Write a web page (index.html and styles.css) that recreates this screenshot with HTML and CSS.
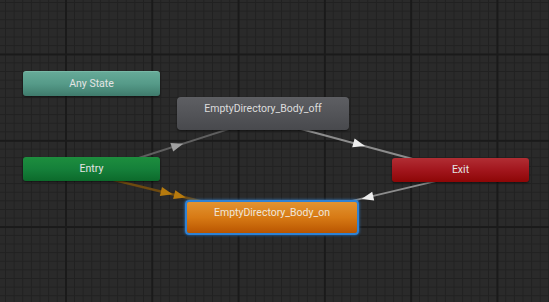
FILE: index.html
```html
<!DOCTYPE html>
<html>
<head>
  <meta charset="UTF-8" />
  <title>Animator - Base Layer</title>
  <link rel="stylesheet" href="styles.css">
</head>
<body>
  <div class="graph">
    <svg class="edges" width="549" height="302" viewBox="0 0 549 302">
      <!-- Entry -> Body_off -->
      <line class="edge edge-dim" x1="92" y1="173" x2="263" y2="118" />
      <polygon class="head head-dim" points="183.2,143.7 173.2,151.6 170.4,143" />

      <!-- Entry -> Body_on (default) -->
      <line class="edge edge-default" x1="91.5" y1="174.6" x2="272" y2="218.5" />
      <polygon class="head head-default" points="172.5,194.3 159.8,195.9 162,187.1" />
      <polygon class="head head-default" points="185.8,197.5 173.1,199.1 175.3,190.3" />

      <!-- Body_off -> Exit -->
      <line class="edge" x1="263" y1="118.7" x2="461" y2="172" />
      <polygon class="head" points="365,146 352.2,147.2 354.6,138.6" />

      <!-- Exit -> Body_on -->
      <line class="edge" x1="272" y1="219.9" x2="461" y2="175.1" />
      <polygon class="head" points="361.5,199 374.2,200.6 372.2,191.8" />
    </svg>

    <div class="node node-any" style="left: 23px; top: 71px;">Any State</div>
    <div class="node node-entry" style="left: 23px; top: 157px;">Entry</div>
    <div class="node node-state" style="left: 177px; top: 97px;">EmptyDirectory_Body_off</div>
    <div class="node node-exit" style="left: 392px; top: 158px;">Exit</div>
    <div class="node node-state node-default" style="left: 185px; top: 200px;">EmptyDirectory_Body_on</div>
  </div>
</body>
</html>
```

FILE: styles.css
```css
body {
  margin: 0;
  padding: 0;
  background-color: #282828;
  font-family: Roboto, "Liberation Sans", sans-serif;
}

.graph {
  position: relative;
  width: 549px;
  height: 302px;
  overflow: hidden;
  background-color: #2a2a2a;
  background-image:
    linear-gradient(90deg, #1a1a1a 0, #1a1a1a 1.5px, transparent 1.5px),
    linear-gradient(180deg, #1a1a1a 0, #1a1a1a 1.5px, transparent 1.5px),
    linear-gradient(90deg, #212121 0, #212121 1px, transparent 1px),
    linear-gradient(180deg, #212121 0, #212121 1px, transparent 1px);
  background-size: 86.3px 86.3px, 86.3px 86.3px, 8.63px 8.63px, 8.63px 8.63px;
  background-position: 65px 0, 0 53.5px, 5px 0, 0 2px;
}

.edges {
  position: absolute;
  left: 0;
  top: 0;
}

.edge {
  stroke: #8c8c8c;
  stroke-width: 2;
}

.edge-dim {
  stroke: #606060;
}

.edge-default {
  stroke: #6e4a10;
  stroke-width: 2.5;
}

.head {
  fill: #ececec;
}

.head-dim {
  fill: #a0a0a0;
}

.head-default {
  fill: #b67a0e;
}

.node {
  position: absolute;
  box-sizing: border-box;
  width: 137px;
  height: 25px;
  border-radius: 3px;
  color: #e4e4e4;
  font-size: 10.5px;
  line-height: 25px;
  text-align: center;
  white-space: nowrap;
  box-shadow: 0 1px 2px rgba(0, 0, 0, 0.55);
}

.node-any {
  background: linear-gradient(to bottom, #66aa98, #559a88 50%, #3f7b6c);
  border-top: 1px solid #78b8a6;
  line-height: 23px;
}

.node-entry {
  height: 24px;
  line-height: 24px;
  background: linear-gradient(to bottom, #1d8e3e, #15803a 50%, #0c6a2b);
}

.node-exit {
  height: 24px;
  line-height: 24px;
  background: linear-gradient(to bottom, #b12e34, #a2161d 50%, #8d0606);
}

.node-state {
  width: 172px;
  height: 33px;
  padding-top: 5px;
  line-height: 14px;
  color: #dcdcdc;
  background: linear-gradient(to bottom, #5e5f63, #515256 60%, #48494d);
  border-radius: 4px;
}

.node-default {
  width: 174px;
  height: 35px;
  padding-top: 4px;
  color: #f0e6da;
  border: 2px solid #2f82d4;
  background: linear-gradient(to bottom, #e29330, #d77a15 50%, #b95500);
  box-shadow: 0 0 3px #3e92e6, 0 1px 2px rgba(0, 0, 0, 0.5);
}
```
